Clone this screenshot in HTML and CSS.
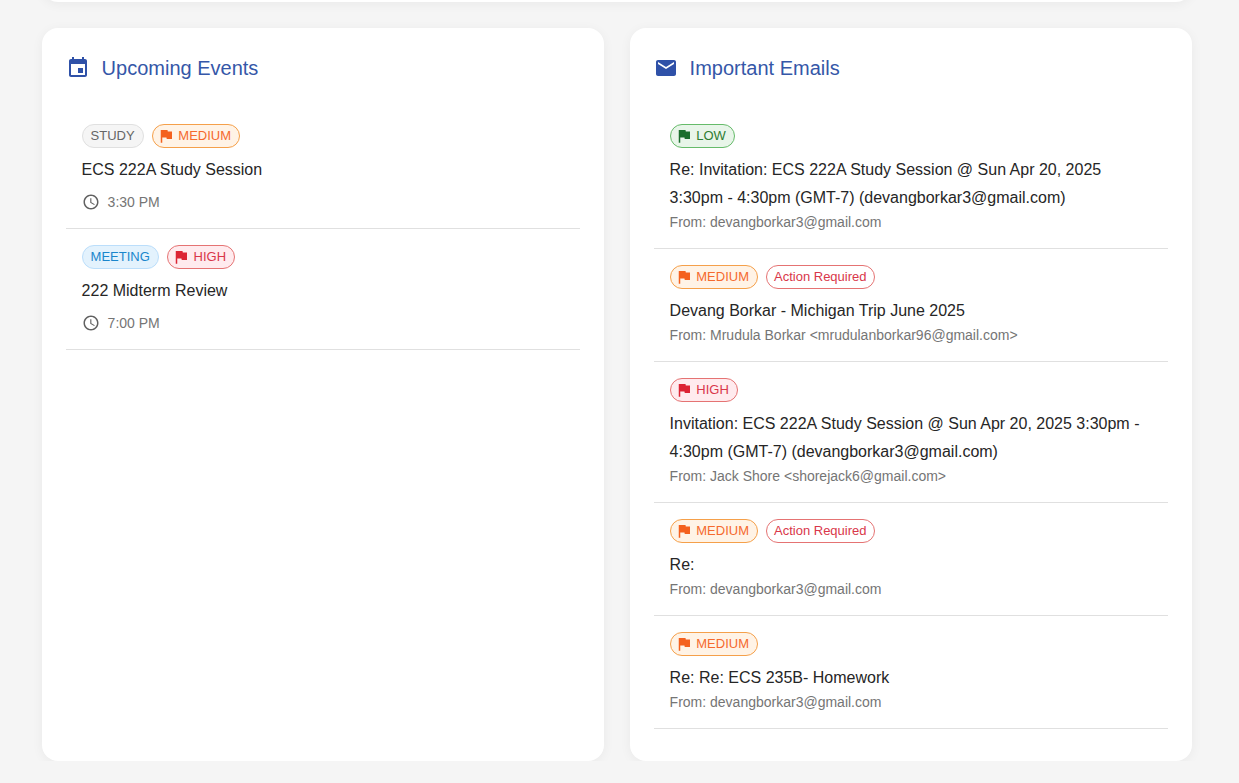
FILE: index.html
```html
<!DOCTYPE html>
<html lang="en">

<head>
  <meta charset="UTF-8" />
  <meta name="viewport" content="width=device-width, initial-scale=1.0" />
  <title>Dashboard</title>
  <link rel="stylesheet" href="styles.css">
</head>

<body>
  <svg class="icon-defs" width="0" height="0">
    <symbol id="i-flag" viewBox="0 0 24 24"><path d="M14.4 6L14 4H5v17h2v-7h5.6l.4 2h7V6z" /></symbol>
    <symbol id="i-clock" viewBox="0 0 24 24"><path d="M11.99 2C6.47 2 2 6.48 2 12s4.47 10 9.99 10C17.52 22 22 17.52 22 12S17.52 2 11.99 2zM12 20c-4.42 0-8-3.58-8-8s3.58-8 8-8 8 3.58 8 8-3.58 8-8 8zm.5-13H11v6l5.25 3.15.75-1.23-4.5-2.67z" /></symbol>
  </svg>

  <main class="page">
    <div class="card top-card"></div>

    <div class="columns">
      <section class="card">
        <div class="card-header">
          <svg class="header-icon" viewBox="0 0 24 24"><path d="M17 12h-5v5h5v-5zM16 1v2H8V1H6v2H5c-1.11 0-1.99.9-1.99 2L3 19c0 1.1.89 2 2 2h14c1.1 0 2-.9 2-2V5c0-1.1-.9-2-2-2h-1V1h-2zm3 18H5V8h14v11z" /></svg>
          <h2>Upcoming Events</h2>
        </div>
        <ul class="list">
          <li class="item">
            <div class="chips">
              <span class="chip study">STUDY</span>
              <span class="chip medium"><svg class="flag"><use href="#i-flag" /></svg>MEDIUM</span>
            </div>
            <p class="title">ECS 222A Study Session</p>
            <p class="time"><svg class="clock"><use href="#i-clock" /></svg>3:30 PM</p>
          </li>
          <li class="item">
            <div class="chips">
              <span class="chip meeting">MEETING</span>
              <span class="chip high"><svg class="flag"><use href="#i-flag" /></svg>HIGH</span>
            </div>
            <p class="title">222 Midterm Review</p>
            <p class="time"><svg class="clock"><use href="#i-clock" /></svg>7:00 PM</p>
          </li>
        </ul>
      </section>

      <section class="card">
        <div class="card-header">
          <svg class="header-icon" viewBox="0 0 24 24"><path d="M20 4H4c-1.1 0-1.99.9-1.99 2L2 18c0 1.1.9 2 2 2h16c1.1 0 2-.9 2-2V6c0-1.1-.9-2-2-2zm0 4l-8 5-8-5V6l8 5 8-5v2z" /></svg>
          <h2>Important Emails</h2>
        </div>
        <ul class="list">
          <li class="item">
            <div class="chips">
              <span class="chip low"><svg class="flag"><use href="#i-flag" /></svg>LOW</span>
            </div>
            <p class="title">Re: Invitation: ECS 222A Study Session @ Sun Apr 20, 2025 3:30pm - 4:30pm (GMT-7) (devangborkar3@gmail.com)</p>
            <p class="from">From: devangborkar3@gmail.com</p>
          </li>
          <li class="item">
            <div class="chips">
              <span class="chip medium"><svg class="flag"><use href="#i-flag" /></svg>MEDIUM</span>
              <span class="chip action">Action Required</span>
            </div>
            <p class="title">Devang Borkar - Michigan Trip June 2025</p>
            <p class="from">From: Mrudula Borkar &lt;mrudulanborkar96@gmail.com&gt;</p>
          </li>
          <li class="item">
            <div class="chips">
              <span class="chip high"><svg class="flag"><use href="#i-flag" /></svg>HIGH</span>
            </div>
            <p class="title">Invitation: ECS 222A Study Session @ Sun Apr 20, 2025 3:30pm - 4:30pm (GMT-7) (devangborkar3@gmail.com)</p>
            <p class="from">From: Jack Shore &lt;shorejack6@gmail.com&gt;</p>
          </li>
          <li class="item">
            <div class="chips">
              <span class="chip medium"><svg class="flag"><use href="#i-flag" /></svg>MEDIUM</span>
              <span class="chip action">Action Required</span>
            </div>
            <p class="title">Re:</p>
            <p class="from">From: devangborkar3@gmail.com</p>
          </li>
          <li class="item">
            <div class="chips">
              <span class="chip medium"><svg class="flag"><use href="#i-flag" /></svg>MEDIUM</span>
            </div>
            <p class="title">Re: Re: ECS 235B- Homework</p>
            <p class="from">From: devangborkar3@gmail.com</p>
          </li>
        </ul>
      </section>
    </div>
  </main>
</body>

</html>
```

FILE: styles.css
```css
* {
  margin: 0;
  padding: 0;
  box-sizing: border-box;
}

body {
  background-color: #f5f5f5;
  font-family: "Liberation Sans", Arial, sans-serif;
  color: #262626;
  overflow: hidden;
}

.icon-defs {
  display: block;
  height: 0;
}

.page {
  width: 1150px;
  margin-left: 41.6px;
}

.card {
  background: #fff;
  border-radius: 16px;
  box-shadow: 0 2px 12px rgba(0, 0, 0, 0.05);
  padding: 24px;
}

/* only the bottom edge of this card is still in view */
.top-card {
  height: 32px;
  padding: 0;
  margin-top: -30px;
  margin-bottom: 26px;
}

.columns {
  display: grid;
  grid-template-columns: 562px 562px;
  gap: 26px;
}

.columns .card {
  height: 733px;
}

.card-header {
  display: flex;
  align-items: center;
  gap: 12px;
  height: 32px;
  margin-bottom: 24px;
}

.header-icon {
  width: 24px;
  height: 24px;
  fill: #2f51a8;
}

.card-header h2 {
  font-size: 20px;
  font-weight: 400;
  color: #3557a8;
}

.list {
  list-style: none;
}

.item {
  padding: 16px;
  border-bottom: 1px solid #e0e0e0;
}

.chips {
  display: flex;
  gap: 8px;
  margin-bottom: 8px;
}

.chip {
  display: inline-flex;
  align-items: center;
  height: 24px;
  padding: 0 8px;
  border: 1px solid;
  border-radius: 12px;
  font-size: 13px;
  line-height: 20px;
}

.flag {
  width: 18px;
  height: 18px;
  margin-left: -4px;
  margin-right: 3.7px;
  fill: currentColor;
}

.study {
  background: #f5f5f5;
  border-color: #e0e0e0;
  color: #666;
}

.meeting {
  background: #e3f2fd;
  border-color: #bbdefb;
  color: #1a86cc;
}

.medium {
  background: #fff3e6;
  border-color: #f5a04a;
  color: #f56a2e;
}

.medium .flag {
  color: #f4611e;
}

.high {
  background: #ffebee;
  border-color: #e57373;
  color: #d9374a;
}

.high .flag {
  color: #dc2434;
}

.low {
  background: #e8f5e9;
  border-color: #66bb6a;
  color: #2e7d32;
}

.low .flag {
  color: #1b6e2c;
}

.action {
  padding: 0 7px;
  background: #fff;
  border-color: #e57373;
  color: #d9374a;
}

.title {
  font-size: 16px;
  line-height: 28px;
}

.time {
  display: flex;
  align-items: center;
  gap: 8px;
  height: 20px;
  margin-top: 8px;
  font-size: 14px;
  color: #757575;
}

.clock {
  width: 18px;
  height: 18px;
  fill: #616161;
}

.from {
  font-size: 14px;
  line-height: 20px;
  color: #757575;
}
```
